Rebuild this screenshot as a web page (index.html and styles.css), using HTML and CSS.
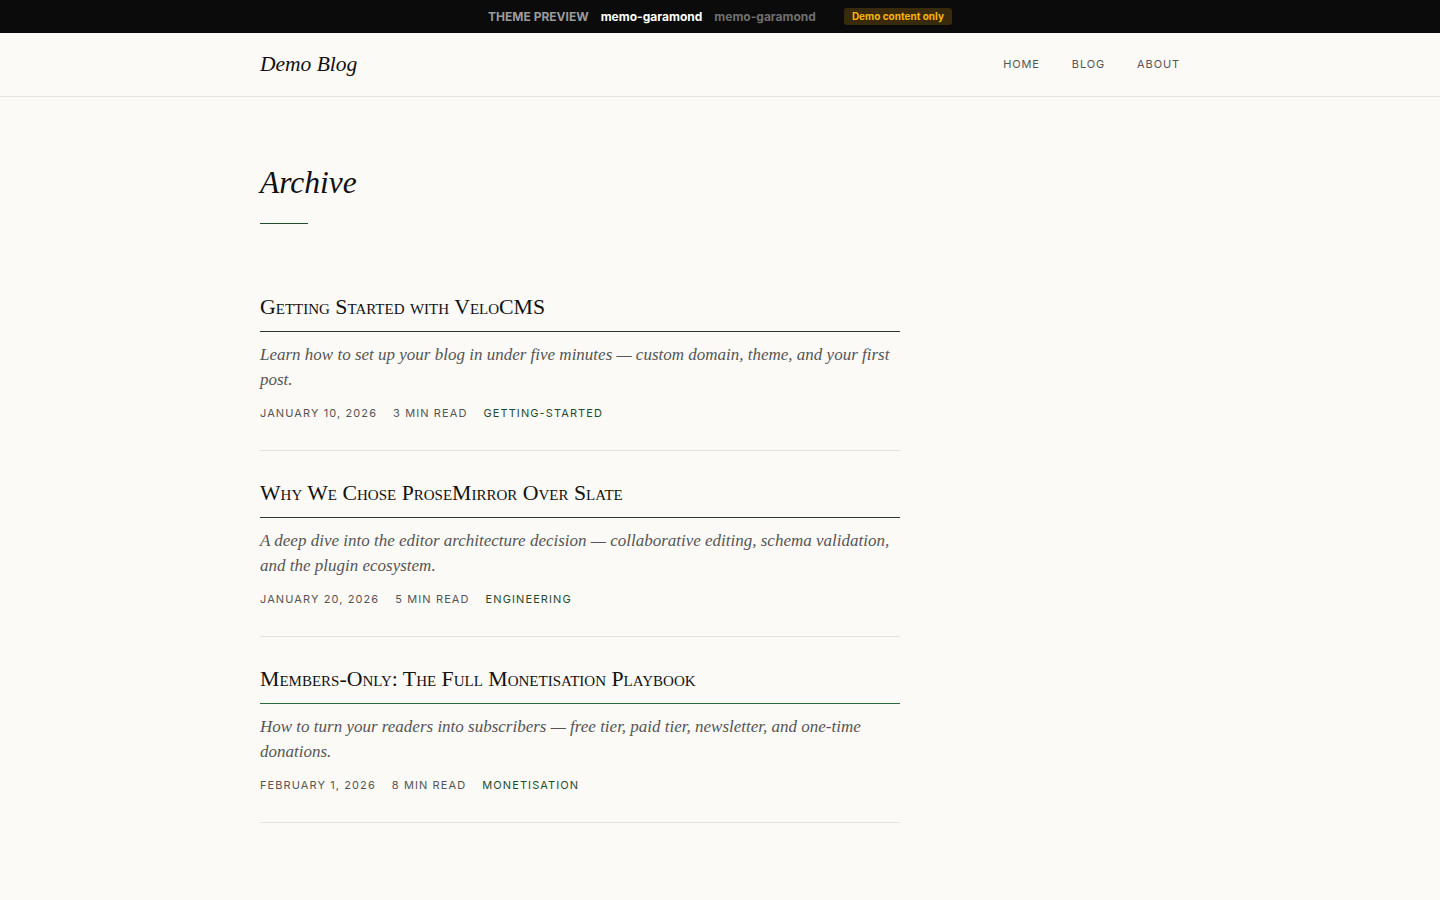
FILE: index.html
```html
<!DOCTYPE html>
<html lang="en">
<head>
    <meta charset="UTF-8">
    <meta name="viewport" content="width=device-width, initial-scale=1.0">
    <title>Archive - Demo Blog</title>
    <link rel="stylesheet" href="styles.css">
</head>
<body>
    <div class="preview-bar">
        <span class="preview-label">THEME PREVIEW</span>
        <span class="preview-name">memo-garamond</span>
        <span class="preview-slug">memo-garamond</span>
        <span class="preview-badge">Demo content only</span>
    </div>

    <header class="site-header">
        <div class="header-inner">
            <a class="logo" href="#">Demo Blog</a>
            <nav class="nav">
                <a href="#">HOME</a>
                <a href="#">BLOG</a>
                <a href="#">ABOUT</a>
            </nav>
        </div>
    </header>

    <main class="archive">
        <h1 class="page-title">Archive</h1>
        <div class="title-rule"></div>

        <article class="post">
            <h2 class="post-title">Getting Started with VeloCMS</h2>
            <p class="excerpt">Learn how to set up your blog in under five minutes — custom domain, theme, and your first post.</p>
            <div class="meta">
                <span>JANUARY 10, 2026</span>
                <span>3 MIN READ</span>
                <a class="tag" href="#">GETTING-STARTED</a>
            </div>
        </article>

        <article class="post">
            <h2 class="post-title">Why We Chose ProseMirror Over Slate</h2>
            <p class="excerpt">A deep dive into the editor architecture decision — collaborative editing, schema validation, and the plugin ecosystem.</p>
            <div class="meta">
                <span>JANUARY 20, 2026</span>
                <span>5 MIN READ</span>
                <a class="tag" href="#">ENGINEERING</a>
            </div>
        </article>

        <article class="post hover">
            <h2 class="post-title">Members-Only: The Full Monetisation Playbook</h2>
            <p class="excerpt">How to turn your readers into subscribers — free tier, paid tier, newsletter, and one-time donations.</p>
            <div class="meta">
                <span>FEBRUARY 1, 2026</span>
                <span>8 MIN READ</span>
                <a class="tag" href="#">MONETISATION</a>
            </div>
        </article>
    </main>
</body>
</html>
```

FILE: styles.css
```css
body{
    margin: 0;
    background: #fbfaf7;
    color: #111;
    font-family: "Liberation Serif", serif;
}
a{
    color: inherit;
    text-decoration: none;
}

/* preview bar */
.preview-bar{
    height: 33px;
    background: #0b0b0b;
    display: flex;
    justify-content: center;
    align-items: center;
    gap: 12px;
    font-family: Inter, sans-serif;
    font-weight: 700;
    font-size: 12px;
}
.preview-label{
    color: #9a9a9a;
}
.preview-name{
    color: #fff;
}
.preview-slug{
    color: #6f6f6f;
}
.preview-badge{
    margin-left: 16px;
    background: #3a2a0c;
    color: #f5b50a;
    font-size: 10px;
    padding: 2px 8px;
    border-radius: 3px;
    line-height: 13px;
}

/* header */
.site-header{
    border-bottom: 1px solid #e6e4df;
}
.header-inner{
    width: 920px;
    margin: 0 auto;
    height: 63px;
    display: flex;
    align-items: center;
    justify-content: space-between;
}
.logo{
    font-style: italic;
    font-size: 21.5px;
    color: #111;
}
.nav{
    display: flex;
    gap: 32px;
    margin-top: -2px;
}
.nav a{
    font-family: Inter, sans-serif;
    font-size: 11px;
    letter-spacing: 0.08em;
    color: #555;
}

/* archive */
.archive{
    width: 640px;
    margin: 0 auto;
    padding: 66px 0 60px;
    position: relative;
    left: -140px;
}
.page-title{
    margin: 0;
    font-style: italic;
    font-weight: 400;
    font-size: 31.5px;
    line-height: 40px;
}
.title-rule{
    width: 48px;
    height: 1px;
    background: #1f4d2e;
    margin: 20px 0 68px;
}

.post{
    border-bottom: 1px solid #e4e2dc;
    padding-bottom: 30px;
    margin-bottom: 27px;
}
.post-title{
    margin: 0;
    font-variant: small-caps;
    font-weight: 400;
    font-size: 21.8px;
    line-height: 30px;
    padding-bottom: 9px;
    border-bottom: 1px solid #2a3a2e;
}
.post.hover .post-title{
    border-bottom-color: #276b3b;
}
.excerpt{
    margin: 10px 0 14px;
    font-style: italic;
    font-size: 17px;
    line-height: 25px;
    color: #555;
}
.meta{
    display: flex;
    gap: 16px;
    font-family: Inter, sans-serif;
    font-size: 11px;
    letter-spacing: 0.1em;
    color: #555;
}
.meta .tag{
    color: #1f4d2e;
}
```
